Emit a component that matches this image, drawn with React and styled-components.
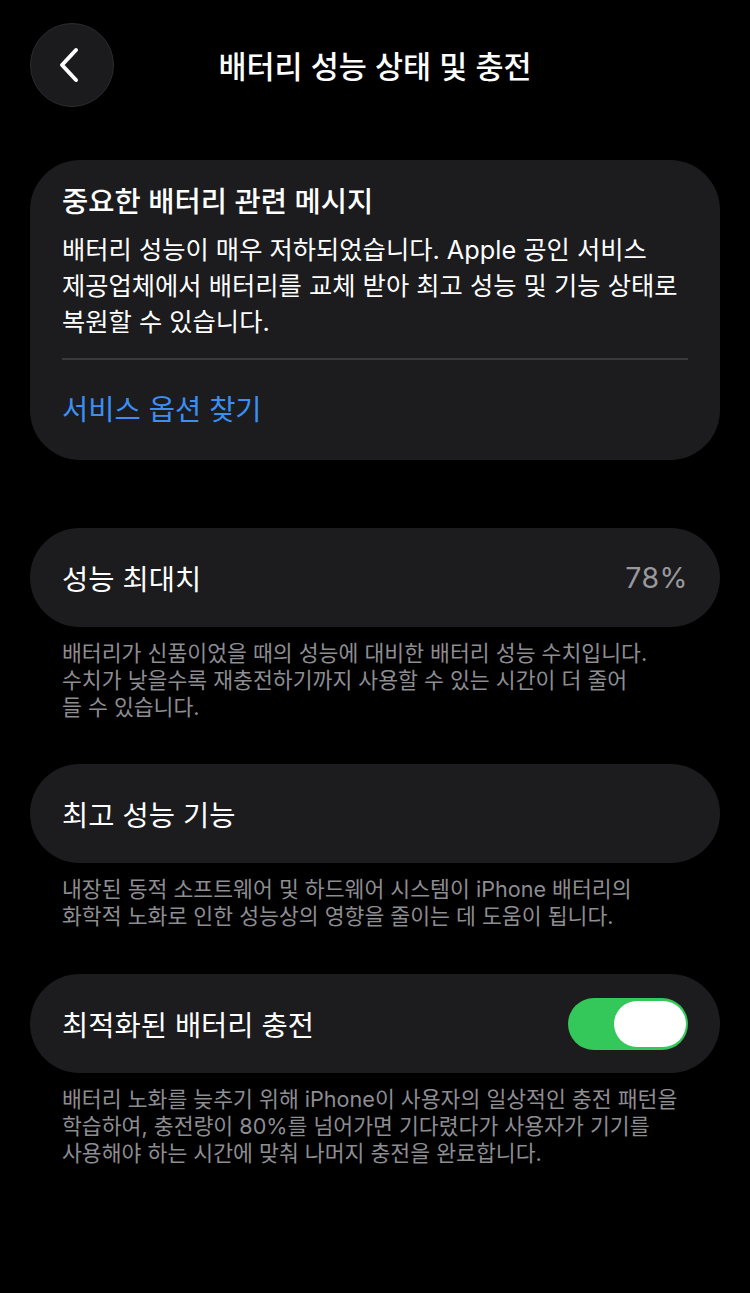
import styled, { createGlobalStyle } from "styled-components";

const GlobalStyle = createGlobalStyle`
  html, body {
    margin: 0;
    padding: 0;
    background: #000;
  }
  body {
    font-family: Inter, "Noto Sans CJK KR", sans-serif;
    color: #fff;
  }
`;

const App = () => {
  return (
    <Page>
      <GlobalStyle />
      <Header>
        <BackButton aria-label="뒤로">
          <svg width="24" height="36" viewBox="0 0 24 36" fill="none">
            <path
              d="M19 3 L5 18 L19 33"
              stroke="#fff"
              strokeWidth="4"
              strokeLinecap="round"
              strokeLinejoin="round"
            />
          </svg>
        </BackButton>
        <Title>배터리 성능 상태 및 충전</Title>
      </Header>

      <MessageCard>
        <CardTitle>중요한 배터리 관련 메시지</CardTitle>
        <CardBody>
          배터리 성능이 매우 저하되었습니다. Apple 공인 서비스
          <br />
          제공업체에서 배터리를 교체 받아 최고 성능 및 기능 상태로
          <br />
          복원할 수 있습니다.
        </CardBody>
        <Divider />
        <LinkText>서비스 옵션 찾기</LinkText>
      </MessageCard>

      <Section $top={68}>
        <Row>
          <RowLabel>성능 최대치</RowLabel>
          <RowValue>78%</RowValue>
        </Row>
        <Footnote>
          배터리가 신품이었을 때의 성능에 대비한 배터리 성능 수치입니다.
          <br />
          수치가 낮을수록 재충전하기까지 사용할 수 있는 시간이 더 줄어
          <br />
          들 수 있습니다.
        </Footnote>
      </Section>

      <Section $top={43}>
        <Row>
          <RowLabel>최고 성능 기능</RowLabel>
        </Row>
        <Footnote>
          내장된 동적 소프트웨어 및 하드웨어 시스템이 iPhone 배터리의
          <br />
          화학적 노화로 인한 성능상의 영향을 줄이는 데 도움이 됩니다.
        </Footnote>
      </Section>

      <Section $top={44}>
        <Row>
          <RowLabel>최적화된 배터리 충전</RowLabel>
          <Toggle $on>
            <Knob />
          </Toggle>
        </Row>
        <Footnote>
          배터리 노화를 늦추기 위해 iPhone이 사용자의 일상적인 충전 패턴을
          <br />
          학습하여, 충전량이 80%를 넘어가면 기다렸다가 사용자가 기기를
          <br />
          사용해야 하는 시간에 맞춰 나머지 충전을 완료합니다.
        </Footnote>
      </Section>
    </Page>
  );
};

const Page = styled.div`
  width: 750px;
  min-height: 1293px;
  box-sizing: border-box;
  padding: 23px 30px 0;
  background: #000;
`;

const Header = styled.header`
  position: relative;
  display: flex;
  align-items: center;
  height: 84px;
`;

const BackButton = styled.button`
  width: 84px;
  height: 84px;
  border-radius: 50%;
  border: 1.5px solid #2c2c2e;
  background: #1b1b1d;
  display: flex;
  align-items: center;
  justify-content: center;
  padding: 0 6px 0 0;
  cursor: pointer;
`;

const Title = styled.h1`
  position: absolute;
  left: 0;
  right: 0;
  top: 50%;
  transform: translateY(-50%);
  margin: 0;
  text-align: center;
  font-size: 30.5px;
  font-weight: 500;
  pointer-events: none;
`;

const MessageCard = styled.section`
  margin-top: 53px;
  background: #1c1c1e;
  border-radius: 50px;
  padding: 24px 32px 32px;
`;

const CardTitle = styled.h2`
  margin: 0;
  font-size: 28.5px;
  line-height: 36px;
  font-weight: 500;
`;

const CardBody = styled.p`
  margin: 12px 0 0;
  font-size: 25.3px;
  line-height: 36px;
  font-weight: 400;
  white-space: nowrap;
`;

const Divider = styled.hr`
  margin: 18px 0 0;
  border: none;
  height: 2px;
  background: #3a3a3c;
`;

const LinkText = styled.a`
  display: block;
  margin-top: 32px;
  font-size: 28.5px;
  line-height: 36px;
  color: #3b8ff2;
`;

const Section = styled.section`
  margin-top: ${({ $top }) => $top}px;
`;

const Row = styled.div`
  height: 99px;
  box-sizing: border-box;
  border-radius: 50px;
  background: #1c1c1e;
  padding: 0 32px;
  display: flex;
  align-items: center;
  justify-content: space-between;
`;

const RowLabel = styled.span`
  font-size: 28.5px;
  color: #fff;
`;

const RowValue = styled.span`
  font-size: 28.5px;
  letter-spacing: 0.5px;
  color: #98989d;
`;

const Toggle = styled.div`
  width: 120px;
  height: 52px;
  border-radius: 26px;
  background: ${({ $on }) => ($on ? "#34c759" : "#39393d")};
  display: flex;
  align-items: center;
  justify-content: ${({ $on }) => ($on ? "flex-end" : "flex-start")};
  padding: 0 2px;
  box-sizing: border-box;
`;

const Knob = styled.div`
  width: 72px;
  height: 46px;
  border-radius: 23px;
  background: #fff;
`;

const Footnote = styled.p`
  margin: 13px 0 0;
  padding: 0 0 0 32px;
  font-size: 21.6px;
  line-height: 27px;
  color: #8d8d92;
  white-space: nowrap;
`;

export default App;
